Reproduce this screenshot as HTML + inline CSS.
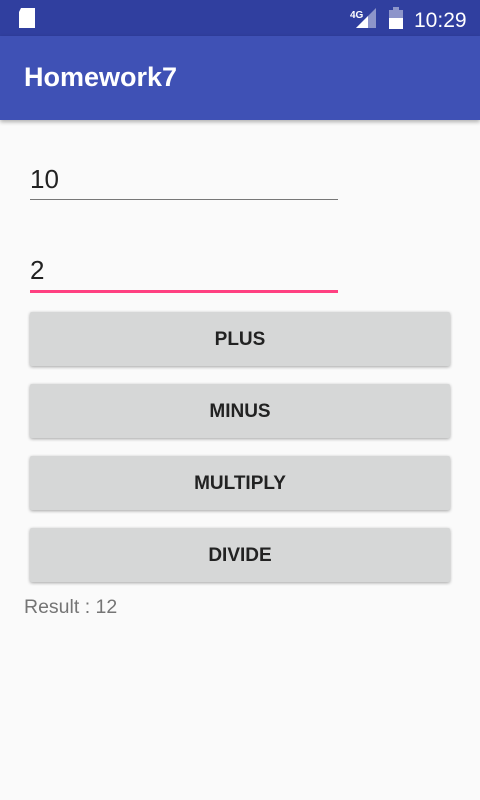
<!DOCTYPE html>
<html><head><style>
body{margin:0;width:480px;height:800px;background:#fafafa;font-family:"Liberation Sans",sans-serif;position:relative;overflow:hidden}
.sb{position:absolute;top:0;left:0;width:480px;height:36px;background:#303f9f}
.ab{position:absolute;top:36px;left:0;width:480px;height:84px;background:#3f51b5;box-shadow:0 2px 4px rgba(0,0,0,.3)}
.ab div{position:absolute;left:24px;top:26px;color:#fff;font-size:27px;font-weight:bold}
.in{position:absolute;left:30px;width:308px;font-size:26px;color:#222}
.btn{position:absolute;left:30px;width:420px;height:54px;background:#d6d7d7;border-radius:2px;box-shadow:0 1px 3px rgba(0,0,0,.35);text-align:center;line-height:56px;font-size:19px;font-weight:bold;color:#222}
</style></head><body>
<div class="sb">
<svg width="480" height="36" style="position:absolute;top:0;left:0">
<path d="M21 8h14v20h-16v-16z" fill="#fff"/>
<text x="350" y="18" font-size="10" font-weight="bold" fill="#fff" font-family="Liberation Sans">4G</text>
<path d="M356 28l20-20v20z" fill="#fff" opacity=".45"/><path d="M356 28l12-12v12z" fill="#fff"/>
<rect x="389" y="10" width="14" height="19" fill="#fff" opacity=".45"/><rect x="389" y="18" width="14" height="11" fill="#fff"/><rect x="393" y="7" width="6" height="3" fill="#fff" opacity=".45"/>
<text x="414" y="27" font-size="21" fill="#fff" font-family="Liberation Sans">10:29</text>
</svg></div>
<div class="ab"><div>Homework7</div></div>
<div class="in" style="top:164px">10</div>
<div style="position:absolute;left:30px;top:199px;width:308px;height:1px;background:#777"></div>
<div class="in" style="top:255px">2</div>
<div style="position:absolute;left:30px;top:290px;width:308px;height:3px;background:#ff4081"></div>
<div class="btn" style="top:312px">PLUS</div>
<div class="btn" style="top:384px">MINUS</div>
<div class="btn" style="top:456px">MULTIPLY</div>
<div class="btn" style="top:528px">DIVIDE</div>
<div style="position:absolute;left:24px;top:596px;font-size:19.5px;color:#757575">Result : 12</div>
</body></html>
